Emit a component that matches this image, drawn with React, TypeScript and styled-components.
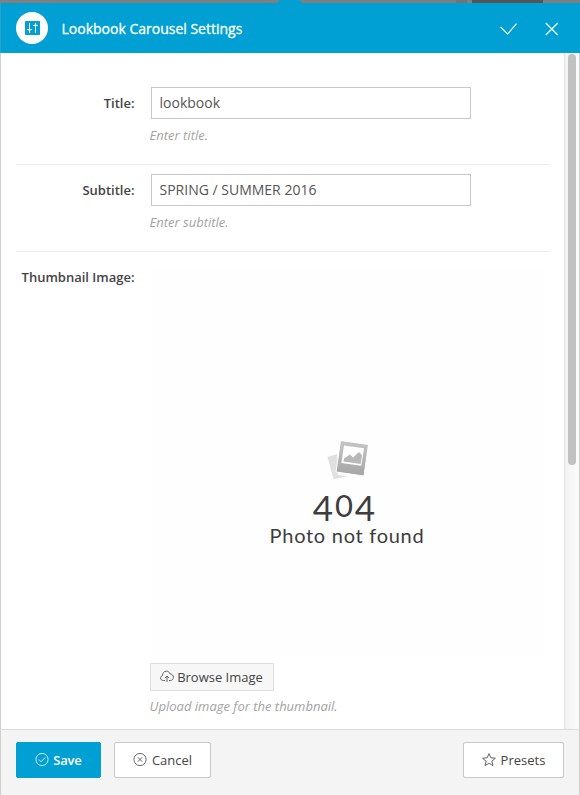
import React from "react";
import styled, { createGlobalStyle, css } from "styled-components";

const GlobalStyle = createGlobalStyle`
  * { box-sizing: border-box; }
  html, body { margin: 0; padding: 0; overflow: hidden; background: #fff; }
  body { font-family: "Open Sans", "Noto Sans", sans-serif; font-size: 13px; color: #444; }
`;

const Page = styled.div`
  width: 580px;
  height: 795px;
  display: flex;
  flex-direction: column;
`;

const Backdrop = styled.div`
  height: 3px;
  flex: none;
  background: #808080;
  svg { display: block; }
`;

const Header = styled.header`
  height: 50px;
  flex: none;
  background: #00a0d4;
  border-left: 1px solid #2f9fc6;
  display: flex;
  align-items: center;
  padding: 0 21px 0 15px;
  color: #fff;
`;

const Badge = styled.div`
  width: 32px;
  height: 32px;
  border-radius: 50%;
  background: #fff;
  display: flex;
  align-items: center;
  justify-content: center;
`;

const Heading = styled.h1`
  flex: 1;
  margin: 2px 0 0 13.5px;
  font-size: 14px;
  line-height: 20px;
  font-weight: 400;
  -webkit-text-stroke: 0.3px #fff;
`;

const HeaderActions = styled.div`
  display: flex;
  gap: 28px;
  padding-top: 2px;
  svg { display: block; }
`;

const Body = styled.main`
  height: 676px;
  flex: none;
  display: flex;
  border: solid #d0d0d0;
  border-width: 0 1px;
  background: #fff;
`;

const Form = styled.div`
  flex: 1;
  min-width: 0;
  padding: 24px 14px 0 15px;
`;

const Row = styled.section<{ $height: number; $top: number; $last?: boolean }>`
  height: ${(p) => p.$height}px;
  width: 533px;
  display: flex;
  gap: 15.5px;
  padding-top: ${(p) => p.$top}px;
  ${(p) => !p.$last && css`border-bottom: 1px solid #ececec;`}
`;

const Label = styled.label`
  width: 118.5px;
  flex: none;
  text-align: right;
  font-weight: 600;
  line-height: 18px;
  padding-top: 7px;
  white-space: nowrap;
`;

const Field = styled.div`
  display: flex;
  flex-direction: column;
  align-items: flex-start;
`;

const Input = styled.input`
  width: 320px;
  height: 32px;
  margin-left: 1px;
  border: 1px solid #c8c8c8;
  background: #fff;
  padding: 0 8px 1px 7.5px;
  font: 14px "Open Sans", sans-serif;
  color: #555;
  outline: none;
  border-radius: 0;
`;

const Hint = styled.p<{ $gap: number }>`
  margin: ${(p) => p.$gap}px 0 0 -0.4px;
  line-height: 18px;
  font-style: italic;
  color: #a3a3a3;
`;

const Thumbnail = styled.div`
  width: 394px;
  height: 388px;
  margin-top: 6px;
  background: #fefefe;
  display: flex;
  flex-direction: column;
  align-items: center;
  padding-top: 173px;
  font-family: Lato, sans-serif;
  color: #3d3d3f;
  > svg { margin-left: 2px; }
`;

const Code = styled.div`
  height: 31px;
  margin: 12px 6px 0 0;
  display: flex;
  align-items: flex-start;
`;

const Digit = styled.span<{ $low?: boolean }>`
  display: flex;
  justify-content: center;
  width: 21px;
  font-size: ${(p) => (p.$low ? 35 : 31)}px;
  line-height: 26px;
  padding-top: ${(p) => (p.$low ? 2 : 0)}px;
`;

const NotFound = styled.div`
  font-size: 20px;
  line-height: 20px;
  letter-spacing: 0.72px;
  margin-top: 2px;
`;

const Button = styled.button<{ $kind?: "primary" | "small" }>`
  display: flex;
  align-items: center;
  justify-content: center;
  gap: 5px;
  height: 36px;
  padding: 0;
  border: 1px solid #c8c8c8;
  border-radius: 2px;
  background: #fff;
  color: #444;
  font: 13px "Open Sans", sans-serif;
  white-space: nowrap;
  svg { display: block; flex: none; }
  ${(p) => p.$kind === "primary" && css`
    gap: 4px;
    background: #00a0d4;
    border-color: #00a0d4;
    color: #fff;
    font-weight: 600;
    letter-spacing: -0.2px;
  `}
  ${(p) => p.$kind === "small" && css`
    height: 28px;
    width: 124px;
    gap: 3px;
    padding-right: 1px;
    margin-top: 8px;
    border-color: #ddd;
    border-radius: 1px;
    background: #f7f7f7;
    svg { margin-top: -2px; }
  `}
`;

const SaveButton = styled(Button)`width: 85px;`;
const CancelButton = styled(Button)`width: 97px; margin-left: 13px;`;
const PresetsButton = styled(Button)`width: 101px; margin-left: auto;`;

const Track = styled.div`
  width: 15px;
  flex: none;
  border-left: 1px solid #e4e4e4;
  background: linear-gradient(90deg, #f3f3f3, #fcfcfc);
  padding: 1px 0 0 3px;
`;

const Thumb = styled.div`
  width: 8px;
  height: 411px;
  border-radius: 4px;
  background: #c1c1c1;
`;

const Footer = styled.footer`
  height: 66px;
  flex: none;
  display: flex;
  align-items: flex-start;
  background: #f4f4f4;
  border: solid #d0d0d0;
  border-width: 1px 1px 0;
  border-top-color: #dadada;
  padding: 12px 15px 0;
`;

const SlidersIcon = () => (
  <svg width="16" height="16" viewBox="0 0 16 16">
    <rect x="1" y="1" width="15" height="14" rx="0.8" fill="#00a0d4" />
    <path d="M5.500 3v10M11.500 3v10" stroke="#fff" strokeWidth="1" fill="none" />
    <path d="M3 9.500h5M9 5.500h5" stroke="#fff" strokeWidth="1" fill="none" />
    <path d="M4 10h3l-1.500 1.500zM10 5h3l-1.500-1.500z" fill="#fff" fillOpacity="0.6" />
  </svg>
);

const PhotosIcon = () => (
  <svg width="42" height="40" viewBox="0 0 42 40">
    <defs>
      <linearGradient id="photo" x1="0" y1="0" x2="0" y2="1">
        <stop offset="0" stopColor="#c6c6c6" />
        <stop offset="1" stopColor="#a5a5a5" />
      </linearGradient>
    </defs>
    <path d="M.5 17l9.5-3 1 21 10 1.300-14.500 3z" fill="#e0e0e0" />
    <path d="M13.500 .5l28 4-4.500 31.500-28-4z" fill="url(#photo)" stroke="#fff" strokeWidth="1" />
    <path d="M17 5.500l20 2.700-2.600 17.500-20-2.700z" fill="#fff" />
    <path d="M16.500 21.500l.5-3 6-4 3 3 6-5.500 3 3-1.300 9z" fill="#b8b8b8" />
  </svg>
);

const CloudIcon = () => (
  <svg width="14" height="13" viewBox="0 0 14 13" fill="none" stroke="#555" strokeWidth="0.9">
    <path d="M5 10.5H3.3C1.700 10.5.6 9.5.6 8c0-1.200.8-2.100 1.900-2.400C2.400 3 4.100 1.200 6.400 1.200c1.800 0 3.200 1 3.700 2.800 1.900 0 3.300 1.300 3.300 3.200 0 1.900-1.300 3.300-3.200 3.300H9M7 12V6M5 8l2-2 2 2" />
  </svg>
);

const RoundIcon = ({ mark }: { mark: string }) => (
  <svg width="14" height="14" viewBox="0 0 14 14" fill="none" stroke="currentColor" strokeWidth="0.8">
    <circle cx="7" cy="6.500" r="6.100" />
    <path d={mark} />
  </svg>
);

const StarIcon = () => (
  <svg width="14" height="14" viewBox="0 0 14 14" fill="none" stroke="#555" strokeWidth="0.9">
    <path d="M7 .6l1.800 4.200 4.600.4-3.500 3 1.100 4.400L7 10.300l-4 2.300 1.100-4.400-3.500-3 4.600-.4z" />
  </svg>
);

export default function App() {
  return (
    <Page>
      <GlobalStyle />
      <Backdrop>
        <svg width="580" height="3">
          <path d="M456 0h11v3h-11z" fill="#747474" />
          <path d="M472 0h71v3h-71z" fill="#555" />
          <path d="M280 0h19l4 3h-26z" fill="#00a0d4" />
        </svg>
      </Backdrop>
      <Header>
        <Badge><SlidersIcon /></Badge>
        <Heading>Lookbook Carousel Settings</Heading>
        <HeaderActions>
          <svg width="17" height="13" viewBox="0 0 17 13" fill="none" stroke="#fff" strokeWidth="1.1"><path d="M.6 5l7 7L16.500 1.700" /></svg>
          <svg width="14" height="14" viewBox="0 0 14 14" fill="none" stroke="#fff" strokeWidth="1.1"><path d="M.8 1l12 12M12.800 1l-12 12" /></svg>
        </HeaderActions>
      </Header>
      <Body>
        <Form>
          <Row $height={88} $top={10}>
            <Label>Title:</Label>
            <Field>
              <Input defaultValue="lookbook" />
              <Hint $gap={7}>Enter title.</Hint>
            </Field>
          </Row>
          <Row $height={87} $top={9}>
            <Label>Subtitle:</Label>
            <Field>
              <Input defaultValue="SPRING / SUMMER 2016" />
              <Hint $gap={7}>Enter subtitle.</Hint>
            </Field>
          </Row>
          <Row $height={470} $top={9} $last>
            <Label>Thumbnail Image:</Label>
            <Field>
              <Thumbnail>
                <PhotosIcon />
                <Code><Digit $low>4</Digit><Digit>0</Digit><Digit $low>4</Digit></Code>
                <NotFound>Photo not found</NotFound>
              </Thumbnail>
              <Button $kind="small"><CloudIcon />Browse Image</Button>
              <Hint $gap={6}>Upload image for the thumbnail.</Hint>
            </Field>
          </Row>
        </Form>
        <Track><Thumb /></Track>
      </Body>
      <Footer>
        <SaveButton $kind="primary"><RoundIcon mark="M3.800 6.500l2.300 2.300 4.200-4.500" />Save</SaveButton>
        <CancelButton><RoundIcon mark="M4.700 4.200l4.600 4.600M9.300 4.200L4.700 8.800" />Cancel</CancelButton>
        <PresetsButton><StarIcon />Presets</PresetsButton>
      </Footer>
    </Page>
  );
}
